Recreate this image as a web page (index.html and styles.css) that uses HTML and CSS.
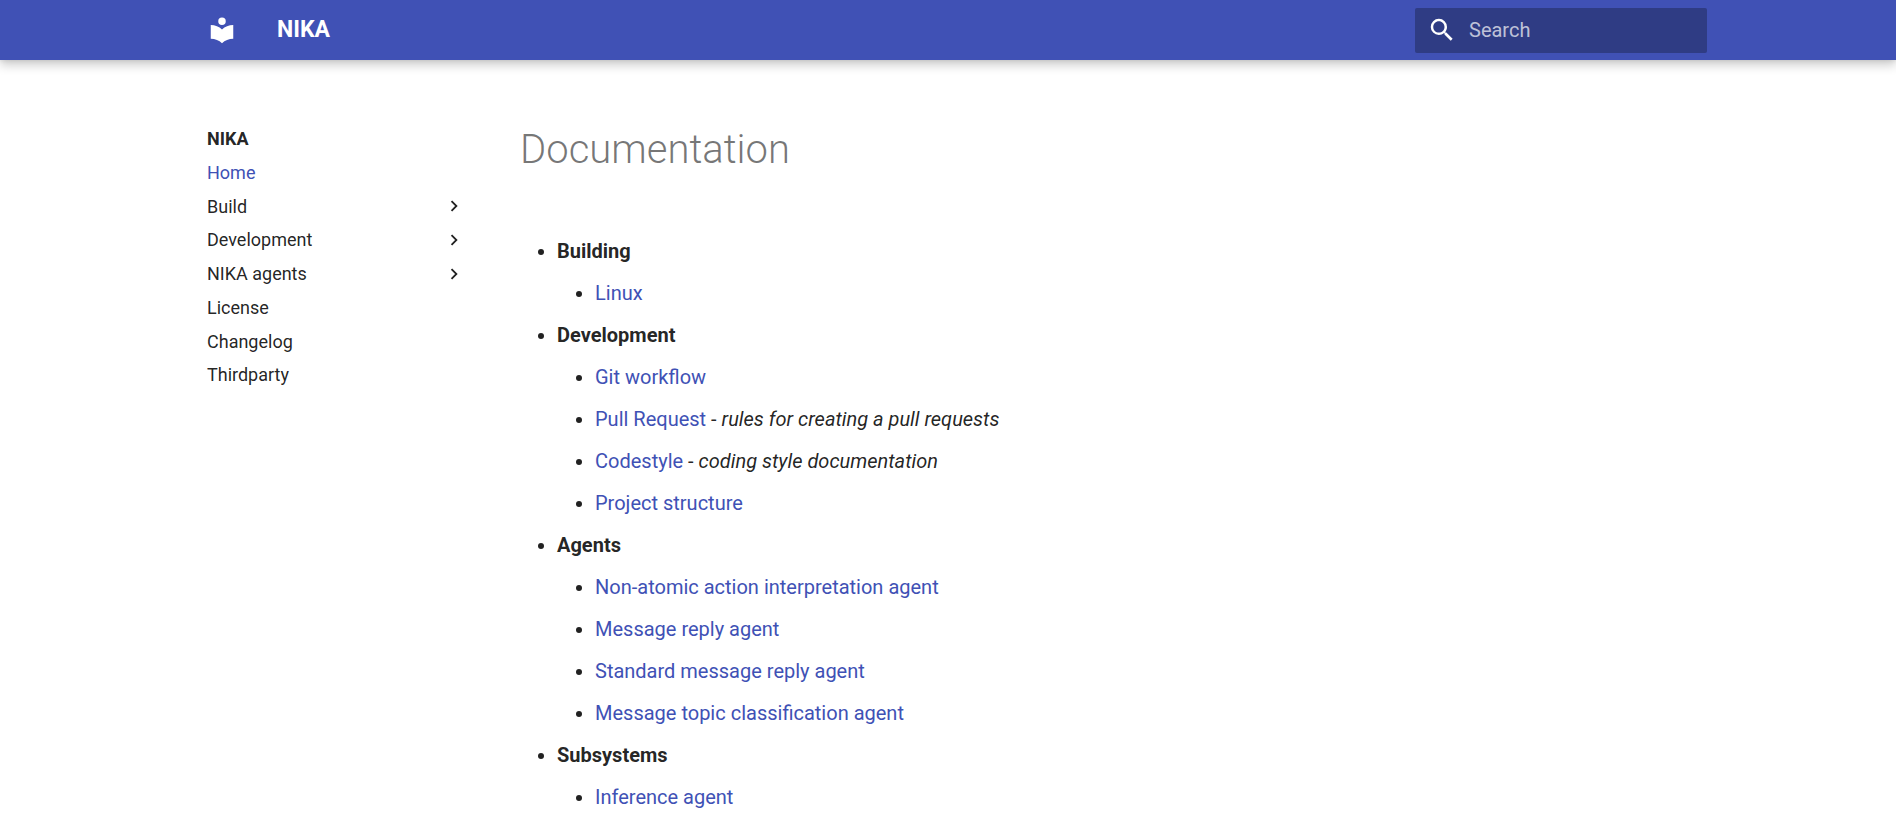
FILE: index.html
```html
<!DOCTYPE html>
<html lang="en">
<head>
<meta charset="utf-8">
<meta name="viewport" content="width=device-width, initial-scale=1">
<title>NIKA</title>
<link rel="stylesheet" href="styles.css">
</head>
<body>
<header class="header">
  <div class="header-inner">
    <a class="logo" href="#" aria-label="NIKA">
      <svg viewBox="0 0 24 24" aria-hidden="true"><path d="M12 8a3 3 0 0 0 3-3 3 3 0 0 0-3-3 3 3 0 0 0-3 3 3 3 0 0 0 3 3m0 3.54C9.64 9.35 6.5 8 3 8v11c3.5 0 6.64 1.35 9 3.54 2.36-2.19 5.5-3.54 9-3.54V8c-3.5 0-6.64 1.35-9 3.54Z"/></svg>
    </a>
    <span class="title">NIKA</span>
    <form class="search" role="search">
      <label class="search-icon" for="query" aria-label="Search">
        <svg viewBox="0 0 24 24" aria-hidden="true"><path d="M9.5 3A6.5 6.5 0 0 1 16 9.500c0 1.610-.59 3.090-1.560 4.230l.27.27h.79l5 5-1.500 1.500-5-5v-.79l-.27-.27A6.516 6.516 0 0 1 9.500 16 6.500 6.500 0 0 1 3 9.500 6.500 6.500 0 0 1 9.500 3m0 2C7 5 5 7 5 9.500S7 14 9.500 14 14 12 14 9.500 12 5 9.500 5Z"/></svg>
      </label>
      <input id="query" class="search-input" type="text" placeholder="Search">
    </form>
  </div>
</header>
<div class="layout">
  <nav class="nav" aria-label="NIKA">
    <strong class="nav-title">NIKA</strong>
    <ul class="nav-list">
      <li><a class="nav-link active" href="#">Home</a></li>
      <li><a class="nav-link" href="#">Build<svg class="chevron" viewBox="0 0 24 24" aria-hidden="true"><path d="M8.590 16.580 13.170 12 8.590 7.410 10 6l6 6-6 6-1.410-1.420Z"/></svg></a></li>
      <li><a class="nav-link" href="#">Development<svg class="chevron" viewBox="0 0 24 24" aria-hidden="true"><path d="M8.590 16.580 13.170 12 8.590 7.410 10 6l6 6-6 6-1.410-1.420Z"/></svg></a></li>
      <li><a class="nav-link" href="#">NIKA agents<svg class="chevron" viewBox="0 0 24 24" aria-hidden="true"><path d="M8.590 16.580 13.170 12 8.590 7.410 10 6l6 6-6 6-1.410-1.420Z"/></svg></a></li>
      <li><a class="nav-link" href="#">License</a></li>
      <li><a class="nav-link" href="#">Changelog</a></li>
      <li><a class="nav-link" href="#">Thirdparty</a></li>
    </ul>
  </nav>
  <main class="content">
    <h1>Documentation</h1>
    <ul class="doc-list">
      <li><strong>Building</strong>
        <ul>
          <li><a href="#">Linux</a></li>
        </ul>
      </li>
      <li><strong>Development</strong>
        <ul>
          <li><a href="#">Git workflow</a></li>
          <li><a href="#">Pull Request</a> - <em>rules for creating a pull requests</em></li>
          <li><a href="#">Codestyle</a> - <em>coding style documentation</em></li>
          <li><a href="#">Project structure</a></li>
        </ul>
      </li>
      <li><strong>Agents</strong>
        <ul>
          <li><a href="#">Non-atomic action interpretation agent</a></li>
          <li><a href="#">Message reply agent</a></li>
          <li><a href="#">Standard message reply agent</a></li>
          <li><a href="#">Message topic classification agent</a></li>
        </ul>
      </li>
      <li><strong>Subsystems</strong>
        <ul>
          <li><a href="#">Inference agent</a></li>
        </ul>
      </li>
    </ul>
  </main>
</div>
</body>
</html>
```
FILE: styles.css
```css
* {
  box-sizing: border-box;
}

body {
  margin: 0;
  background: #fff;
  color: rgba(0, 0, 0, 0.87);
  font-family: Roboto, "Liberation Sans", sans-serif;
  font-size: 20px;
  line-height: 32px;
}

a {
  color: #4051b5;
  text-decoration: none;
}

ul {
  margin: 0;
  padding: 0;
}

.header {
  position: sticky;
  top: 0;
  z-index: 1;
  background: #4051b5;
  color: #fff;
  box-shadow: 0 0 5px rgba(0, 0, 0, 0.1), 0 5px 10px rgba(0, 0, 0, 0.2);
}

.header-inner,
.layout {
  display: flex;
  max-width: 1526px;
  margin: 0 auto;
}

.header-inner {
  align-items: center;
  height: 60px;
  padding: 0 4px 0 22px;
}

.logo {
  display: flex;
}

.logo svg {
  width: 30px;
  height: 30px;
  fill: #fff;
}

.title {
  flex: 1;
  margin-left: 40px;
  font-size: 23px;
  font-weight: 700;
}

.search {
  display: flex;
  align-items: center;
  gap: 12px;
  width: 292px;
  height: 45px;
  padding: 0 12px;
  border-radius: 2px;
  background: #2f3c84;
}

.search-icon {
  display: flex;
}

.search-icon svg {
  width: 30px;
  height: 30px;
  fill: #fff;
}

.search-input {
  flex: 1;
  min-width: 0;
  padding: 0;
  border: 0;
  outline: 0;
  background: transparent;
  color: #fff;
  font: inherit;
}

.search-input::placeholder {
  color: rgba(255, 255, 255, 0.7);
  opacity: 1;
}

.nav {
  flex: none;
  width: 302px;
  padding: 67px 22px 0 22px;
  font-size: 18px;
  line-height: 1.32;
}

.nav-title {
  display: block;
}

.nav-list {
  list-style: none;
}

.nav-link {
  display: flex;
  align-items: center;
  justify-content: space-between;
  margin-top: 10px;
  color: rgba(0, 0, 0, 0.87);
}

.nav-link.active {
  color: #4051b5;
}

.chevron {
  width: 22px;
  height: 22px;
  fill: #212121;
}

.content {
  flex: 1;
  min-width: 0;
  padding: 64px 30px 0 33px;
}

h1 {
  margin: 0 0 59px;
  color: rgba(0, 0, 0, 0.54);
  font-size: 40px;
  font-weight: 300;
  line-height: 52px;
}

.doc-list {
  padding-left: 37px;
}

.doc-list,
.doc-list ul {
  list-style: disc;
}

.doc-list li {
  margin-bottom: 10px;
}

.doc-list ul {
  margin: 10px 0;
  padding-left: 38px;
}

.doc-list li:last-child {
  margin-bottom: 0;
}

.doc-list > li:last-child > ul {
  margin-bottom: 0;
}
```
